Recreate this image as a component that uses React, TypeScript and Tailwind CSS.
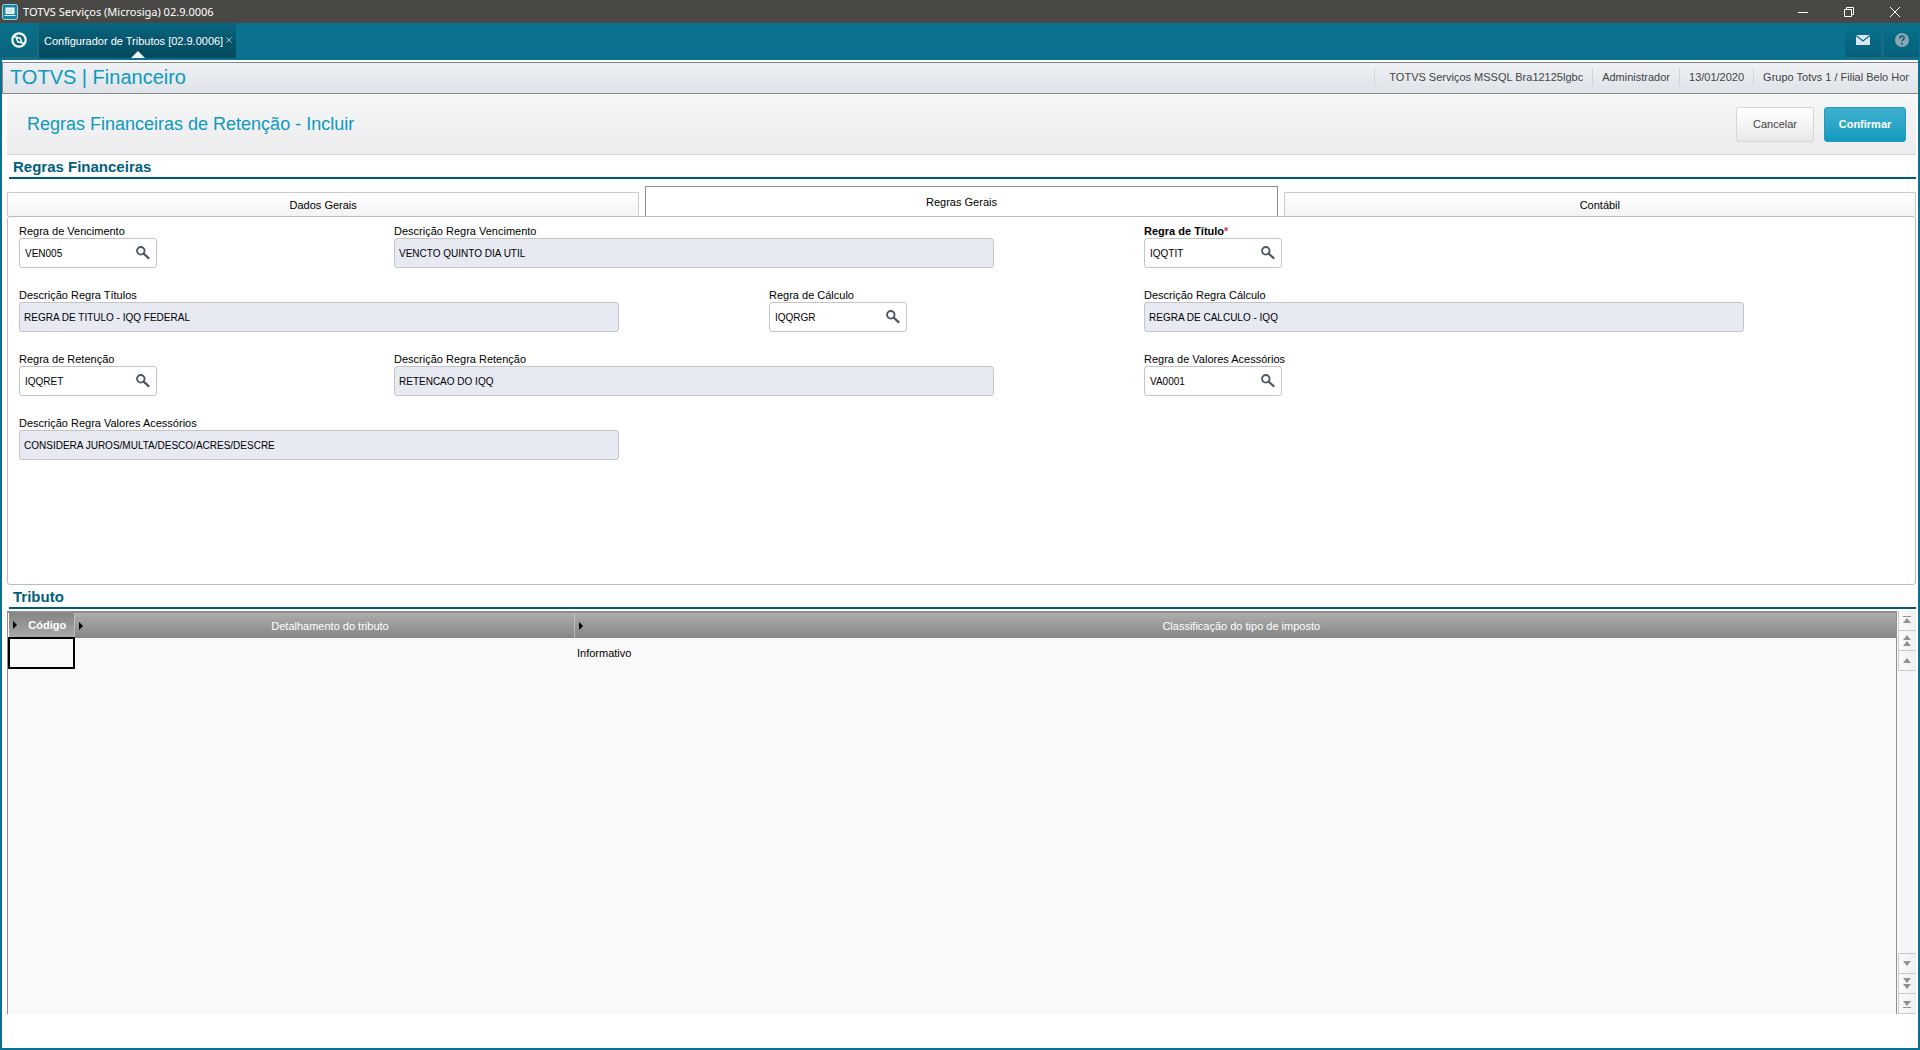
import React, { useState } from 'react';

interface Field {
  id: string;
  label: string;
  value: string;
  kind: 'lookup' | 'description';
  required?: boolean;
  cell: string;
}

const tabs = ['Dados Gerais', 'Regras Gerais', 'Contábil'];

const sessionInfo = [
  'TOTVS Serviços MSSQL Bra12125lgbc',
  'Administrador',
  '13/01/2020',
  'Grupo Totvs 1 / Filial Belo Hor'
];

const fields: Field[] = [
  { id: 'venc', label: 'Regra de Vencimento', value: 'VEN005', kind: 'lookup', cell: 'col-start-1' },
  { id: 'descVenc', label: 'Descrição Regra Vencimento', value: 'VENCTO QUINTO DIA UTIL', kind: 'description', cell: 'col-span-2' },
  { id: 'titulo', label: 'Regra de Título', value: 'IQQTIT', kind: 'lookup', required: true, cell: 'col-span-2' },
  { id: 'descTitulo', label: 'Descrição Regra Títulos', value: 'REGRA DE TITULO - IQQ FEDERAL', kind: 'description', cell: 'col-span-2' },
  { id: 'calculo', label: 'Regra de Cálculo', value: 'IQQRGR', kind: 'lookup', cell: 'col-span-1' },
  { id: 'descCalculo', label: 'Descrição Regra Cálculo', value: 'REGRA DE CALCULO - IQQ', kind: 'description', cell: 'col-span-2' },
  { id: 'retencao', label: 'Regra de Retenção', value: 'IQQRET', kind: 'lookup', cell: 'col-start-1' },
  { id: 'descRetencao', label: 'Descrição Regra Retenção', value: 'RETENCAO DO IQQ', kind: 'description', cell: 'col-span-2' },
  { id: 'valores', label: 'Regra de Valores Acessórios', value: 'VA0001', kind: 'lookup', cell: 'col-span-2' },
  { id: 'descValores', label: 'Descrição Regra Valores Acessórios', value: 'CONSIDERA JUROS/MULTA/DESCO/ACRES/DESCRE', kind: 'description', cell: 'col-span-2' }
];

const SearchIcon = () => (
  <svg width="14" height="14" viewBox="0 0 14 14" fill="none" stroke="#4a5568">
    <circle cx="4.8" cy="4.8" r="3.8" strokeWidth="1.8" />
    <path d="M7.6 7.6l5.600 5" strokeWidth="2.200" />
  </svg>
);

const FormField: React.FC<{ field: Field }> = ({ field }) => {
  const [value, setValue] = useState(field.value);

  return (
    <div className={field.cell}>
      <label htmlFor={field.id} className={`block ${field.required ? 'font-bold' : ''}`}>
        {field.label}
        {field.required && <span className="text-red-500">*</span>}
      </label>
      {field.kind === 'lookup' ? (
        <div className="flex h-[30px] w-[138px] items-center rounded-[3px] border border-[#c3c5c6] bg-white pr-[6px]">
          <input
            id={field.id}
            value={value}
            onChange={(e) => setValue(e.target.value)}
            className="h-full min-w-0 flex-1 pl-[5px] text-[10px] outline-none"
          />
          <button type="button" aria-label={`Pesquisar ${field.label}`}>
            <SearchIcon />
          </button>
        </div>
      ) : (
        <input
          id={field.id}
          value={value}
          readOnly
          className="block h-[30px] w-4/5 rounded-[3px] border border-[#c3c5c6] bg-[#e7eaf2] px-1 text-[10px] outline-none"
        />
      )}
    </div>
  );
};

const SectionTitle: React.FC<{ children: React.ReactNode }> = ({ children }) => (
  <h2 className="ml-[2px] border-b-2 border-[#005c74] pt-[2px] pl-1 text-[15px] leading-5 font-bold text-[#00607a]">
    {children}
  </h2>
);

const ScrollButton: React.FC<{ label: string; children: React.ReactNode }> = ({ label, children }) => (
  <button
    type="button"
    aria-label={label}
    className="flex h-5 w-full items-center justify-center border-b border-l border-[#c9cacc] bg-linear-to-r from-[#fbfbfb] to-[#eeeff2] pr-[2px]"
  >
    <svg width="8" height="11" viewBox="0 0 8 11" fill="#919191">
      {children}
    </svg>
  </button>
);

const App: React.FC = () => {
  const [activeTab, setActiveTab] = useState('Regras Gerais');

  return (
    <div className="flex min-h-screen flex-col bg-[#0a728e] font-['Liberation_Sans',Arial,sans-serif] text-[11px] leading-[14px] text-black">
      {/* Window title bar */}
      <div className="flex h-[23px] items-center bg-[#4a4845] pr-5 pl-[2px] font-['Noto_Sans','Open_Sans',sans-serif] text-white">
        <svg width="16" height="16" viewBox="0 0 16 16">
          <rect x="0.5" y="0.5" width="15" height="15" rx="2" fill="#1684a3" stroke="#9fd3e2" />
          <rect x="4" y="4" width="8" height="5.5" fill="#cfe6ee" stroke="#fff" />
          <path d="M2.5 11.5h11" stroke="#e6f3f7" />
        </svg>
        <span className="ml-[5px] flex-1">TOTVS Serviços (Microsiga) 02.9.0006</span>
        <div className="flex items-center gap-9">
          <button type="button" aria-label="Minimizar">
            <svg width="10" height="10" viewBox="0 0 10 10"><path d="M0 5.5h10" stroke="#fff" /></svg>
          </button>
          <button type="button" aria-label="Restaurar">
            <svg width="10" height="10" viewBox="0 0 10 10" fill="none" stroke="#fff">
              <path d="M0.5 2.5h7v7h-7zM2.5 2.5v-2h7v7h-2" />
            </svg>
          </button>
          <button type="button" aria-label="Fechar">
            <svg width="10" height="10" viewBox="0 0 10 10"><path d="M0 0l10 10M10 0L0 10" stroke="#fff" /></svg>
          </button>
        </div>
      </div>

      {/* Application bar */}
      <div className="flex h-[37px] items-start">
        <button
          type="button"
          aria-label="Início"
          className="flex h-[35px] w-[38px] items-center justify-center border-r border-b border-[#2a6474] bg-linear-to-b from-[#0a728e] to-[#08637c]"
        >
          <svg width="16" height="16" viewBox="0 0 16 16" fill="none" stroke="#fff">
            <circle cx="8" cy="8" r="6.7" strokeWidth="2.2" />
            <path d="M2.5 4.500L9.200 6.200L10.800 10.500M13.500 11.500L6.800 9.800L5.200 5.500" strokeWidth="1.500" />
          </svg>
        </button>
        <div className="relative ml-px flex h-[35px] items-center bg-linear-to-b from-[#096680] to-[#04485c] pr-1 pl-[5px] text-white">
          <span>Configurador de Tributos [02.9.0006]</span>
          <button type="button" aria-label="Fechar aba" className="ml-[3px] pb-[2px]">
            <svg width="6" height="6" viewBox="0 0 6 6"><path d="M0.500 0.500l5 5M5.500 0.500l-5 5" stroke="#9cc5d1" /></svg>
          </button>
          <svg className="absolute bottom-0 left-1/2 -translate-x-1/2" width="14" height="7" viewBox="0 0 14 7">
            <path d="M7 0l7 7H0z" fill="#f1f3f6" />
          </svg>
        </div>
        <div className="mr-px ml-auto flex h-[35px]">
          <button type="button" aria-label="Mensagens" className="flex w-9 items-center justify-center border-b border-[#2a6474] bg-linear-to-b from-[#0a728e] to-[#05607a]">
            <svg width="14" height="10" viewBox="0 0 14 10">
              <rect width="14" height="10" fill="#dbe6ee" />
              <path d="M0 0.500l7 5.500l7-5.500" fill="none" stroke="#0a6a85" strokeWidth="1.300" />
            </svg>
          </button>
          <button type="button" aria-label="Ajuda" className="ml-[2px] flex w-9 items-center justify-center border-b border-l border-[#2a6474] bg-linear-to-b from-[#0a728e] to-[#05607a]">
            <svg width="14" height="14" viewBox="0 0 14 14">
              <circle cx="7" cy="7" r="7" fill="#8fa6b2" />
              <path d="M4.800 5.500c0-3 4.400-3 4.400-0.400c0 1.600-2.200 1.600-2.200 3.300" fill="none" stroke="#0a6a85" strokeWidth="1.700" />
              <circle cx="7" cy="10.800" r="1.100" fill="#0a6a85" />
            </svg>
          </button>
        </div>
      </div>

      <div className="mx-[2px] mb-[2px] flex flex-1 flex-col bg-white pt-[2px]">
        {/* Module header */}
        <header className="flex h-8 items-center border border-r-0 border-[#868789] bg-linear-to-b from-[#eff1f4] to-[#dfe3e9] pr-[9px] pb-[2px] pl-[7px]">
          <h1 className="flex-1 text-[20px] leading-6 text-[#0c9abe]">TOTVS | Financeiro</h1>
          <div className="flex gap-[9px] text-[#444]">
            {sessionInfo.map((info, index) => (
              <span key={info} className={`border-l border-[#d2d6d8] py-[2px] ${index === 0 ? 'pl-[14px]' : 'pl-[9px]'}`}>
                {info}
              </span>
            ))}
          </div>
        </header>

        <main className="flex flex-1 flex-col pr-[2px] pb-[34px] pl-[5px]">
          {/* Action bar */}
          <div className="flex h-[61px] items-center gap-[10px] border-b border-[#d5d6d8] bg-linear-to-b from-[#f6f7f7] to-[#ececee] pr-[10px] pl-5">
            <h2 className="flex-1 text-[18px] leading-6 text-[#0c9abe]">Regras Financeiras de Retenção - Incluir</h2>
            <button type="button" className="h-[35px] w-[78px] rounded-[3px] border border-[#d6d6d6] bg-linear-to-b from-white to-[#e9e9e9] text-[#444]">
              Cancelar
            </button>
            <button type="button" className="h-[35px] w-[82px] rounded-[3px] border border-[#2499b8] bg-linear-to-b from-[#3fb0cf] to-[#0f9bc0] font-bold text-white">
              Confirmar
            </button>
          </div>

          <SectionTitle>Regras Financeiras</SectionTitle>

          {/* Tabs */}
          <div role="tablist" className="mt-[7px] grid grid-cols-3 items-end gap-[6px]">
            {tabs.map((tab) => (
              <button
                key={tab}
                type="button"
                role="tab"
                aria-selected={activeTab === tab}
                onClick={() => setActiveTab(tab)}
                className={`border border-b-0 ${
                  activeTab === tab
                    ? 'h-[30px] border-[#909090] bg-white'
                    : 'h-6 border-[#cbcbcb] bg-linear-to-b from-white to-[#f3f3f3]'
                }`}
              >
                {tab}
              </button>
            ))}
          </div>

          <div role="tabpanel" className="min-h-[369px] rounded-[3px] border border-[#bcbcbc] pt-[7px] pr-[21px] pl-[11px]">
            <div className="grid grid-cols-5 gap-y-5">
              {fields.map((field) => (
                <FormField key={field.id} field={field} />
              ))}
            </div>
          </div>

          <SectionTitle>Tributo</SectionTitle>

          {/* Tax grid */}
          <div className="mt-[2px] flex flex-1">
            <div className="flex-1 border-x border-t-2 border-[#8e8e8e] bg-[#f9f9f9]">
              <table className="w-full table-fixed border-collapse">
                <colgroup>
                  <col className="w-[65px]" />
                  <col className="w-[500px]" />
                  <col />
                </colgroup>
                <thead>
                  <tr className="h-[25px] text-white">
                    {['Código', 'Detalhamento do tributo', 'Classificação do tipo de imposto'].map((title, index) => (
                      <th
                        key={title}
                        className={`p-0 ${
                          index === 0
                            ? 'bg-linear-to-b from-[#858585] to-[#a9a9a9] font-bold'
                            : 'border-l border-[#bdbdbd] bg-linear-to-b from-[#adadad] to-[#868686] font-normal'
                        }`}
                      >
                        <div className="flex items-center pl-1">
                          <svg width="4" height="8" viewBox="0 0 4 8"><path d="M0 0l4 4l-4 4z" /></svg>
                          <span className="flex-1 pl-1">{title}</span>
                        </div>
                      </th>
                    ))}
                  </tr>
                </thead>
                <tbody>
                  <tr className="h-[30px]">
                    <td className="border-2 border-black"></td>
                    <td></td>
                    <td className="p-0 pl-[3px]">Informativo</td>
                  </tr>
                </tbody>
              </table>
            </div>
            <div className="ml-px flex w-[18px] flex-col bg-[#f6f6f9]">
              <ScrollButton label="Primeiro registro"><path d="M0 1h8v1H0zM4 3l4 5H0z" /></ScrollButton>
              <ScrollButton label="Página anterior"><path d="M4 0l4 5H0zM4 6l4 5H0z" /></ScrollButton>
              <ScrollButton label="Registro anterior"><path d="M4 3l4 5H0z" /></ScrollButton>
              <div className="flex-1 border-b border-[#c9cacc]" />
              <ScrollButton label="Próximo registro"><path d="M4 8l4-5H0z" /></ScrollButton>
              <ScrollButton label="Próxima página"><path d="M4 5l4-5H0zM4 11l4-5H0z" /></ScrollButton>
              <ScrollButton label="Último registro"><path d="M0 9h8v1H0zM4 8l4-5H0z" /></ScrollButton>
            </div>
          </div>
        </main>
      </div>
    </div>
  );
};

export default App;
